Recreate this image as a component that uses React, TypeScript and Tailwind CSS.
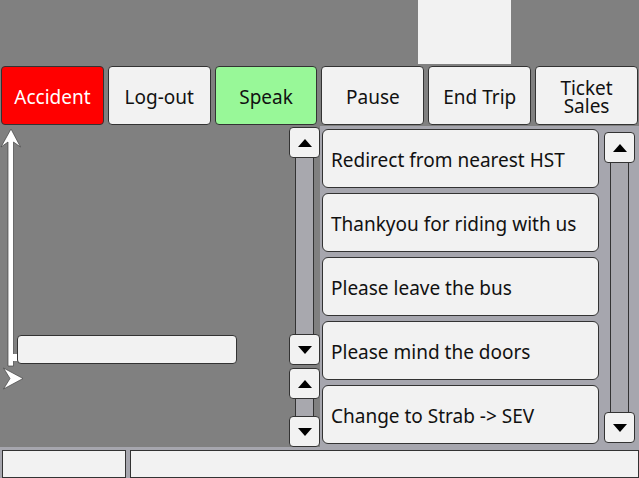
const font = { fontFamily: '"Noto Sans", "Open Sans", sans-serif' };

const topButtons = [
  { label: "Accident", cls: "bg-[#ff0000] text-white" },
  { label: "Log-out", cls: "bg-[#f2f2f2] text-[#111]" },
  { label: "Speak", cls: "bg-[#98f898] text-[#111]" },
  { label: "Pause", cls: "bg-[#f2f2f2] text-[#111]" },
  { label: "End Trip", cls: "bg-[#f2f2f2] text-[#111]" },
  { label: "Ticket\nSales", cls: "bg-[#f2f2f2] text-[#111]" },
];

const messages = [
  "Redirect from nearest HST",
  "Thankyou for riding with us",
  "Please leave the bus",
  "Please mind the doors",
  "Change to Strab -> SEV",
];

function Arrow({ up }: { up?: boolean }) {
  return (
    <svg width="14" height="8" viewBox="0 0 14 8">
      {up ? <polygon points="7,0 14,8 0,8" fill="#000" /> : <polygon points="0,0 14,0 7,8" fill="#000" />}
    </svg>
  );
}

function ScrollBtn({ up }: { up?: boolean }) {
  return (
    <div className="flex h-[31px] w-[31px] shrink-0 items-center justify-center rounded-[4px] border border-[#333] bg-[#f2f2f2]">
      <Arrow up={up} />
    </div>
  );
}

function Track() {
  return <div className="mx-auto w-[19px] flex-1 border-x border-[#333] bg-[#a8a8ae]" />;
}

export default function App() {
  return (
    <div className="flex h-[478px] w-[639px] flex-col overflow-hidden bg-[#808080]" style={font}>
      <div className="h-[66px] shrink-0">
        <div className="ml-[418px] h-[64px] w-[93px] bg-[#f2f2f2]" />
      </div>

      <div className="flex h-[60px] shrink-0 gap-[4px] pl-[1px] pr-[1px]">
        {topButtons.map((b) => (
          <div
            key={b.label}
            className={`flex h-[59px] flex-1 items-center justify-center whitespace-pre-line rounded-[4px] border border-[#333] pt-[2px] text-center text-[19px] leading-[18px] ${b.cls}`}
          >
            {b.label}
          </div>
        ))}
      </div>

      <div className="flex h-[321px] shrink-0">
        <div className="flex w-[289px] shrink-0 pt-[3px]">
          {/* axis arrows */}
          <svg width="24" height="262" viewBox="0 0 24 262" className="shrink-0">
            <path d="M11 0 L20.5 18 L13.5 13 L13.5 237 L8 237 L8 13 L1 18 Z" fill="#fff" stroke="#444" strokeWidth="0.7" />
            <rect x="13" y="225" width="5" height="7" fill="#fff" />
            <path d="M3.5 239 L23 249.5 L3.5 260 L10 249.5 Z" fill="#fff" stroke="#444" strokeWidth="0.7" />
          </svg>
          <div className="ml-[-7px] mt-[206px] h-[29px] w-[220px] rounded-[4px] border border-[#333] bg-[#f2f2f2]" />
        </div>

        <div className="flex w-[31px] shrink-0 flex-col pt-[1px]">
          <ScrollBtn up />
          <div className="flex h-[176px] flex-col">
            <Track />
          </div>
          <ScrollBtn />
          <div className="h-[3px]" />
          <ScrollBtn up />
          <Track />
          <ScrollBtn />
        </div>

        <div className="flex flex-1 gap-[5px] bg-[#a6a6ae] pl-[2px] pt-[3px]">
          <div className="flex w-[277px] flex-col gap-[5px]">
            {messages.map((m) => (
              <div
                key={m}
                className="flex h-[59px] items-center rounded-[6px] border border-[#333] bg-[#f2f2f2] pl-[8px] pt-[3px] text-[19px] text-[#111]"
              >
                {m}
              </div>
            ))}
          </div>
          <div className="flex w-[31px] flex-col pb-[4px] pt-[3px]">
            <ScrollBtn up />
            <Track />
            <ScrollBtn />
          </div>
        </div>
      </div>

      <div className="flex flex-1 gap-[4px] bg-[#a6a6ae] pl-[2px] pt-[3px]">
        <div className="w-[124px] border border-[#333] bg-[#f2f2f2]" />
        <div className="flex-1 border border-[#333] bg-[#f2f2f2]" />
      </div>
    </div>
  );
}
